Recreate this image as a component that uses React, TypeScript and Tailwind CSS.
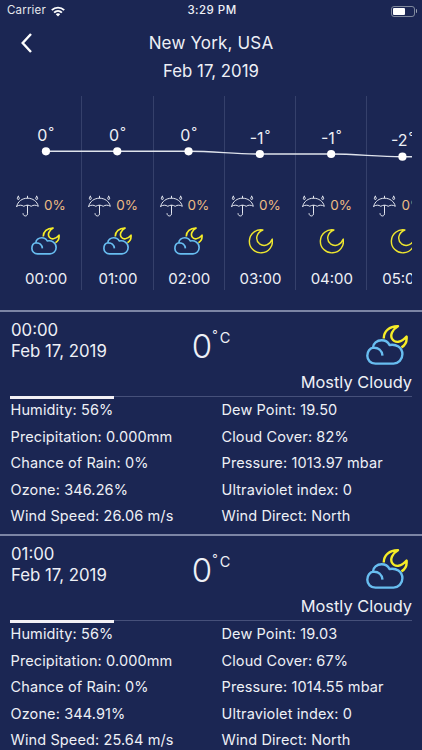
import { clsx } from 'clsx';

type Sky = 'cloudy' | 'clear';

const hours: { time: string; temp: number; rain: string; sky: Sky; y: number }[] = [
  { time: '00:00', temp: 0, rain: '0%', sky: 'cloudy', y: 55.3 },
  { time: '01:00', temp: 0, rain: '0%', sky: 'cloudy', y: 55.3 },
  { time: '02:00', temp: 0, rain: '0%', sky: 'cloudy', y: 55.3 },
  { time: '03:00', temp: -1, rain: '0%', sky: 'clear', y: 58 },
  { time: '04:00', temp: -1, rain: '0%', sky: 'clear', y: 58 },
  { time: '05:00', temp: -2, rain: '0%', sky: 'clear', y: 60.7 },
];

const COLUMN = 71.3;

const reports = [
  {
    time: '00:00',
    date: 'Feb 17, 2019',
    temp: 0,
    summary: 'Mostly Cloudy',
    details: [
      ['Humidity: 56%', 'Dew Point: 19.50'],
      ['Precipitation: 0.000mm', 'Cloud Cover: 82%'],
      ['Chance of Rain: 0%', 'Pressure: 1013.97 mbar'],
      ['Ozone: 346.26%', 'Ultraviolet index: 0'],
      ['Wind Speed: 26.06 m/s', 'Wind Direct: North'],
    ],
  },
  {
    time: '01:00',
    date: 'Feb 17, 2019',
    temp: 0,
    summary: 'Mostly Cloudy',
    details: [
      ['Humidity: 56%', 'Dew Point: 19.03'],
      ['Precipitation: 0.000mm', 'Cloud Cover: 67%'],
      ['Chance of Rain: 0%', 'Pressure: 1014.55 mbar'],
      ['Ozone: 344.91%', 'Ultraviolet index: 0'],
      ['Wind Speed: 25.64 m/s', 'Wind Direct: North'],
    ],
  },
];

function CloudMoon({ className }: { className?: string }) {
  return (
    <svg viewBox="0 0 42 40" fill="none" strokeWidth="2.4" strokeLinejoin="round" className={className}>
      <path
        stroke="#f5ec27"
        d="M17.8 13.5C17.6 6.5 23.5 1.1 32 1.3C26.2 4.6 23.8 10 26.2 14C28.9 18.4 35.6 17.8 40.6 11.6C41 16 39.4 20.2 35.4 22.4"
      />
      <path
        stroke="#68bdf0"
        d="M9.5 38.6C4.6 38.6 1.3 35 1.3 30.8C1.3 26.4 4 23.2 7 22.6C7 18.6 11 15.3 15.6 15.3C19 15.3 22 17 23.5 20C30 18.6 36.4 22.6 36.4 29.3C36.4 34.6 32.4 38.6 27.5 38.6ZM7 22.8C12.4 22.3 16 25.6 16.5 30.6"
      />
    </svg>
  );
}

function Moon({ className }: { className?: string }) {
  return (
    <svg viewBox="0 0 26 26" fill="none" stroke="#eee62f" strokeWidth="1.5" strokeLinejoin="round" className={className}>
      <path d="M15.5 1A12 12 0 1 0 25.2 10.5C23 16.5 16.8 19 12 15.4C7 11.4 8.6 3.8 15.5 1Z" />
    </svg>
  );
}

function Umbrella() {
  return (
    <svg
      viewBox="0 0 23 22"
      fill="none"
      stroke="#e3e6ef"
      strokeWidth="1"
      strokeLinejoin="round"
      strokeLinecap="round"
      className="h-[22px] w-[23px] shrink-0"
    >
      <path d="M.7 11.3C1.8 6.3 6.3 3.2 11.5 3.2C16.7 3.2 21.2 6.3 22.3 11.3C20 9.8 17.4 9.8 15.2 11.3C13 9.8 10 9.8 7.8 11.3C5.6 9.8 3 9.8.7 11.3Z" />
      <path d="M11.5 1.2V3M11.5 10.5V18.8C11.5 21.8 7 21.8 7 18.6" />
      <path d="M2.3 1.3C1 3 1 4.5 2.3 4.5S3.6 3 2.3 1.3ZM20.7 1.3C19.4 3 19.4 4.5 20.7 4.5S22 3 20.7 1.3Z" />
    </svg>
  );
}

function StatusBar() {
  return (
    <div className="flex h-[22px] items-center justify-between pr-[5px] pl-[7px] text-[11.5px]">
      <div className="flex w-[120px] items-center gap-[5px]">
        <span className="tracking-[0.015em] text-gray-200">Carrier</span>
        <svg viewBox="0 0 14 11" fill="none" stroke="white" strokeWidth="1.9" className="h-[11px] w-[14px]">
          <path d="M.8 4.2C4.3.7 9.7.7 13.2 4.2M3.1 6.6C5.3 4.4 8.7 4.4 10.9 6.6" />
          <path d="M4.8 8.2C6 7 8 7 9.2 8.2L7 10.5Z" fill="white" stroke="none" />
        </svg>
      </div>
      <span className="font-medium tracking-[0.04em]">3:29 PM</span>
      <div className="flex w-[120px] items-center justify-end gap-px">
        <div className="h-[11px] w-6 rounded-[3px] border border-gray-400/80 p-px">
          <div className="h-full w-[12px] rounded-[1px] bg-white" />
        </div>
        <div className="h-1 w-[1.5px] rounded-r bg-gray-400" />
      </div>
    </div>
  );
}

function Header() {
  return (
    <header className="grid h-[74px] grid-cols-[60px_1fr_60px] text-center text-[17px] tracking-[0.01em]">
      <button type="button" aria-label="Back" className="flex items-start pt-[11px] pl-[21px]">
        <svg viewBox="0 0 11 20" fill="none" stroke="white" strokeWidth="2.4" className="h-5 w-[11px]">
          <path d="M10 1L1.7 10L10 19" />
        </svg>
      </button>
      <div>
        <h1 className="pt-[7px] leading-7">New York, USA</h1>
        <p className="text-[16.8px] leading-7 tracking-normal">Feb 17, 2019</p>
      </div>
    </header>
  );
}

function HourlyStrip() {
  // ease horizontally from one reading to the next
  const line = hours
    .map((h, i) => {
      const x = (i + 0.5) * COLUMN;
      if (i === 0) return `M${x} ${h.y}`;
      return `C${x - 45} ${hours[i - 1].y} ${x - 26} ${h.y} ${x} ${h.y}`;
    })
    .join('');

  return (
    <section className="relative mx-[10px] h-[194px] overflow-hidden">
      <div className="flex h-full">
        {hours.map((h, i) => (
          <div
            key={h.time}
            className={clsx('flex w-[71.3px] shrink-0 flex-col items-center', i > 0 && 'border-l border-[#35406b]')}
          >
            <div className="h-[95px] shrink-0" style={{ paddingTop: h.y - 26.5 }}>
              <div className="flex items-start gap-px text-base leading-5">
                {h.temp}
                <span className="text-[13px] leading-[14px]">°</span>
              </div>
            </div>
            <div className="flex h-[29px] w-full shrink-0 items-center gap-[5px] pl-[6px] text-[13.5px] text-[#eebd83]">
              <Umbrella />
              <span>{h.rain}</span>
            </div>
            <div className="flex h-[42px] shrink-0 items-center justify-center">
              {h.sky === 'cloudy' ? <CloudMoon className="h-[28px] w-[29px]" /> : <Moon className="h-[25px] w-[25px]" />}
            </div>
            <div className="pt-[6px] pl-px text-[15px] leading-[22px]">{h.time}</div>
          </div>
        ))}
      </div>
      <svg className="absolute top-0 left-0 h-[194px] w-[428px]" viewBox="0 0 428 194">
        <path d={`${line}h36`} fill="none" stroke="#dfe3ec" strokeWidth="1.4" />
        {hours.map((h, i) => (
          <circle key={h.time} cx={(i + 0.5) * COLUMN + 0.3} cy={h.y} r="4.1" fill="white" />
        ))}
      </svg>
    </section>
  );
}

function Report({ report }: { report: (typeof reports)[number] }) {
  return (
    <article className="h-[224px] border-t-2 border-[#7c85a5]">
      <div className="mx-[10px] grid h-[83.5px] grid-cols-3">
        <div className="pt-[8px] pl-px text-[16.8px] leading-[21px]">
          <p>{report.time}</p>
          <p>{report.date}</p>
        </div>
        <div className="flex justify-center pt-[12px]">
          <span className="text-[33px] leading-[44px] font-light">{report.temp}</span>
          <span className="flex gap-[2px] text-[14.5px] leading-7">
            <span className="text-[12px] leading-[22px]">°</span>C
          </span>
        </div>
        <div className="flex flex-col items-end pt-[13px]">
          <CloudMoon className="mr-[4px] h-[40px] w-[42px]" />
          <p className="pt-[5px] text-[16.4px] leading-6 whitespace-nowrap">{report.summary}</p>
        </div>
      </div>
      <div className="mx-[10px] h-[3px] border-t border-[#46507a]">
        <div className="-mt-px h-[3px] w-[104px] bg-[#f3f0f5]" />
      </div>
      <dl className="mx-[10px] grid grid-cols-[211px_1fr] gap-y-[7.5px] pt-[1.6px] pl-[0.5px] text-[14.5px] leading-[19px] tracking-[0.008em]">
        {report.details.flat().map((item) => (
          <dd key={item} className="whitespace-nowrap">
            {item}
          </dd>
        ))}
      </dl>
    </article>
  );
}

export default function App() {
  return (
    <main className="h-[750px] w-[422px] overflow-hidden bg-[#1b2653] font-['Inter',sans-serif] text-[#eef0f6]">
      <StatusBar />
      <Header />
      <HourlyStrip />
      <div className="pt-[20px]">
        {reports.map((report) => (
          <Report key={report.time} report={report} />
        ))}
      </div>
    </main>
  );
}
